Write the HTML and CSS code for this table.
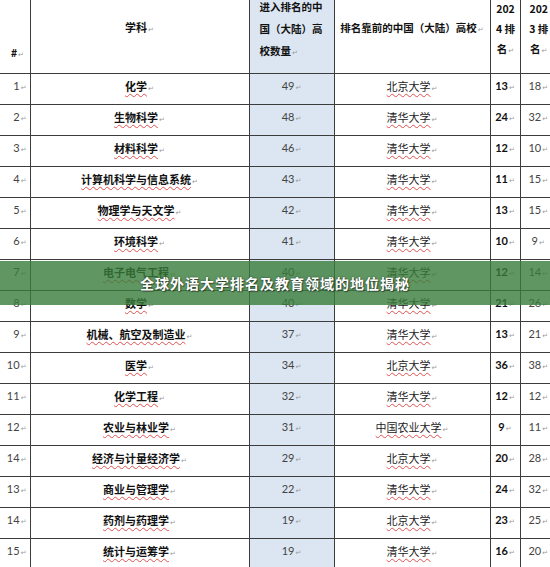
FILE: index.html
```html
<!DOCTYPE html>
<html lang="zh-CN">
<head>
<meta charset="utf-8">
<title>全球外语大学排名及教育领域的地位揭秘</title>
<link rel="stylesheet" href="styles.css">
</head>
<body>
<div class="page">
  <table class="rank">
    <colgroup>
      <col class="c-no"><col class="c-subj"><col class="c-cnt"><col class="c-uni"><col class="c-y24"><col class="c-y23">
    </colgroup>
    <thead>
      <tr class="head">
        <th class="h-no">#<span class="pm">↵</span></th>
        <th class="h-subj">学科<span class="pm">↵</span></th>
        <th class="h-cnt blue">进入排名的中<br>国（大陆）高<br>校数量<span class="pm">↵</span></th>
        <th class="h-uni">排名靠前的中国（大陆）高校<span class="pm">↵</span></th>
        <th class="h-yr">202<br>4 排<br>名<span class="pm">↵</span></th>
        <th class="h-yr">202<br>3 排<br>名<span class="pm">↵</span></th>
      </tr>
    </thead>
    <tbody>
      <tr><td class="no">1<span class="pm">↵</span></td><td class="subj"><span class="sp">化学</span><span class="pm">↵</span></td><td class="cnt blue">49<span class="pm">↵</span></td><td class="uni"><span class="sp">北京大学</span><span class="pm">↵</span></td><td class="y24">13<span class="pm">↵</span></td><td class="y23">18<span class="pm">↵</span></td></tr>
      <tr><td class="no">2<span class="pm">↵</span></td><td class="subj"><span class="sp">生物科学</span><span class="pm">↵</span></td><td class="cnt blue">48<span class="pm">↵</span></td><td class="uni"><span class="sp">清华大学</span><span class="pm">↵</span></td><td class="y24">24<span class="pm">↵</span></td><td class="y23">32<span class="pm">↵</span></td></tr>
      <tr><td class="no">3<span class="pm">↵</span></td><td class="subj"><span class="sp">材料科学</span><span class="pm">↵</span></td><td class="cnt blue">46<span class="pm">↵</span></td><td class="uni"><span class="sp">清华大学</span><span class="pm">↵</span></td><td class="y24">12<span class="pm">↵</span></td><td class="y23">10<span class="pm">↵</span></td></tr>
      <tr><td class="no">4<span class="pm">↵</span></td><td class="subj"><span class="sp">计算机科学与信息系统</span><span class="pm">↵</span></td><td class="cnt blue">43<span class="pm">↵</span></td><td class="uni"><span class="sp">清华大学</span><span class="pm">↵</span></td><td class="y24">11<span class="pm">↵</span></td><td class="y23">15<span class="pm">↵</span></td></tr>
      <tr><td class="no">5<span class="pm">↵</span></td><td class="subj"><span class="sp">物理学与天文学</span><span class="pm">↵</span></td><td class="cnt blue">42<span class="pm">↵</span></td><td class="uni"><span class="sp">清华大学</span><span class="pm">↵</span></td><td class="y24">13<span class="pm">↵</span></td><td class="y23">15<span class="pm">↵</span></td></tr>
      <tr><td class="no">6<span class="pm">↵</span></td><td class="subj"><span class="sp">环境科学</span><span class="pm">↵</span></td><td class="cnt blue">41<span class="pm">↵</span></td><td class="uni"><span class="sp">清华大学</span><span class="pm">↵</span></td><td class="y24">10<span class="pm">↵</span></td><td class="y23">9<span class="pm">↵</span></td></tr>
      <tr><td class="no">7<span class="pm">↵</span></td><td class="subj"><span class="sp">电子电气工程</span><span class="pm">↵</span></td><td class="cnt blue">40<span class="pm">↵</span></td><td class="uni"><span class="sp">清华大学</span><span class="pm">↵</span></td><td class="y24">12<span class="pm">↵</span></td><td class="y23">14<span class="pm">↵</span></td></tr>
      <tr><td class="no">8<span class="pm">↵</span></td><td class="subj"><span class="sp">数学</span><span class="pm">↵</span></td><td class="cnt blue">40<span class="pm">↵</span></td><td class="uni"><span class="sp">清华大学</span><span class="pm">↵</span></td><td class="y24">21<span class="pm">↵</span></td><td class="y23">26<span class="pm">↵</span></td></tr>
      <tr><td class="no">9<span class="pm">↵</span></td><td class="subj"><span class="sp">机械、航空及制造业</span><span class="pm">↵</span></td><td class="cnt blue">37<span class="pm">↵</span></td><td class="uni"><span class="sp">清华大学</span><span class="pm">↵</span></td><td class="y24">13<span class="pm">↵</span></td><td class="y23">21<span class="pm">↵</span></td></tr>
      <tr><td class="no">10<span class="pm">↵</span></td><td class="subj"><span class="sp">医学</span><span class="pm">↵</span></td><td class="cnt blue">34<span class="pm">↵</span></td><td class="uni"><span class="sp">北京大学</span><span class="pm">↵</span></td><td class="y24">36<span class="pm">↵</span></td><td class="y23">38<span class="pm">↵</span></td></tr>
      <tr><td class="no">11<span class="pm">↵</span></td><td class="subj"><span class="sp">化学工程</span><span class="pm">↵</span></td><td class="cnt blue">32<span class="pm">↵</span></td><td class="uni"><span class="sp">清华大学</span><span class="pm">↵</span></td><td class="y24">12<span class="pm">↵</span></td><td class="y23">12<span class="pm">↵</span></td></tr>
      <tr><td class="no">12<span class="pm">↵</span></td><td class="subj"><span class="sp">农业与林业学</span><span class="pm">↵</span></td><td class="cnt blue">31<span class="pm">↵</span></td><td class="uni"><span class="sp">中国农业大学</span><span class="pm">↵</span></td><td class="y24">9<span class="pm">↵</span></td><td class="y23">11<span class="pm">↵</span></td></tr>
      <tr><td class="no">14<span class="pm">↵</span></td><td class="subj"><span class="sp">经济与计量经济学</span><span class="pm">↵</span></td><td class="cnt blue">29<span class="pm">↵</span></td><td class="uni"><span class="sp">北京大学</span><span class="pm">↵</span></td><td class="y24">20<span class="pm">↵</span></td><td class="y23">28<span class="pm">↵</span></td></tr>
      <tr><td class="no">13<span class="pm">↵</span></td><td class="subj"><span class="sp">商业与管理学</span><span class="pm">↵</span></td><td class="cnt blue">22<span class="pm">↵</span></td><td class="uni"><span class="sp">清华大学</span><span class="pm">↵</span></td><td class="y24">24<span class="pm">↵</span></td><td class="y23">32<span class="pm">↵</span></td></tr>
      <tr><td class="no">14<span class="pm">↵</span></td><td class="subj"><span class="sp">药剂与药理学</span><span class="pm">↵</span></td><td class="cnt blue">19<span class="pm">↵</span></td><td class="uni"><span class="sp">北京大学</span><span class="pm">↵</span></td><td class="y24">23<span class="pm">↵</span></td><td class="y23">25<span class="pm">↵</span></td></tr>
      <tr><td class="no">15<span class="pm">↵</span></td><td class="subj"><span class="sp">统计与运筹学</span><span class="pm">↵</span></td><td class="cnt blue">19<span class="pm">↵</span></td><td class="uni"><span class="sp">清华大学</span><span class="pm">↵</span></td><td class="y24">16<span class="pm">↵</span></td><td class="y23">20<span class="pm">↵</span></td></tr>
    </tbody>
  </table>
  <div class="banner"><h1 class="banner-title">全球外语大学排名及教育领域的地位揭秘</h1></div>
</div>
</body>
</html>
```
FILE: styles.css
```css
html, body {
  margin: 0;
  padding: 0;
  background: #ffffff;
}
.page {
  position: relative;
  width: 550px;
  height: 567px;
  overflow: hidden;
  font-family: "Noto Sans CJK SC", sans-serif;
  color: #111;
}
.rank {
  margin-top: -13px;
  border-collapse: collapse;
  table-layout: fixed;
  width: 556px;
}
.c-no { width: 30px; }
.c-subj { width: 219px; }
.c-cnt { width: 85px; }
.c-uni { width: 156px; }
.c-y24 { width: 30px; }
.c-y23 { width: 36px; }

.rank th, .rank td {
  border: 1px solid #3c3c3c;
  padding: 0;
  overflow: hidden;
  white-space: nowrap;
}
.rank tr > :first-child { border-left: 0; }
.rank tr > :last-child { border-right: 0; }
.rank thead th { border-top: 0; }

.head { height: 86px; }
.head th {
  font-size: 10.5px;
  font-weight: 700;
  line-height: 22px;
  color: #111;
}
.h-no {
  text-align: left;
  vertical-align: bottom;
  padding: 0 0 7px 11px !important;
  font-family: Lato, "Noto Sans CJK SC", sans-serif;
}
.h-subj { text-align: center; vertical-align: middle; padding-bottom: 2px !important; font-size: 11px !important; }
.h-cnt { text-align: left; vertical-align: middle; padding-left: 10px !important; }
.h-uni { text-align: center; vertical-align: middle; padding-bottom: 2px !important; }
.h-yr { text-align: center; vertical-align: middle; line-height: 20px !important; padding-left: 1px !important; }

.blue { background: #dce6f2; }

.rank tbody tr { height: 31px; }
.rank tbody td {
  vertical-align: middle;
  padding-bottom: 3px;
  line-height: 14px;
}
.no {
  text-align: right;
  padding-right: 3px !important;
  font-family: Lato, sans-serif;
  font-size: 11px;
  color: #444;
}
.subj {
  text-align: center;
  font-size: 11px;
  font-weight: 700;
  color: #111;
}
.cnt {
  text-align: center;
  font-family: Lato, sans-serif;
  font-size: 11px;
  color: #444;
}
.uni {
  text-align: center;
  font-size: 11px;
  font-weight: 400;
  color: #222;
}
.y24 {
  text-align: center;
  font-family: Lato, sans-serif;
  font-size: 11px;
  font-weight: 700;
  color: #111;
}
.y23 {
  text-align: center;
  font-family: Lato, sans-serif;
  font-size: 11px;
  color: #444;
  padding-right: 4px;
}
.sp {
  text-decoration-line: underline;
  text-decoration-style: wavy;
  text-decoration-color: #e05050;
  text-decoration-thickness: 1px;
  text-underline-offset: 2px;
}
.pm {
  font-family: "DejaVu Sans", sans-serif;
  font-size: 7px;
  font-weight: 400;
  color: #9a9a9a;
  margin-left: 1px;
}

.banner {
  position: absolute;
  left: 0;
  top: 261px;
  width: 550px;
  height: 44px;
  background: rgba(56, 124, 58, 0.8);
  display: flex;
  align-items: center;
  justify-content: center;
}
.banner-title {
  margin: 0;
  padding-left: 0;
  font-size: 14px;
  font-weight: 700;
  letter-spacing: 1px;
  color: #ffffff;
  text-shadow: 0 0 2px rgba(0,0,0,0.55), 1px 1px 1px rgba(0,0,0,0.4);
}
```
